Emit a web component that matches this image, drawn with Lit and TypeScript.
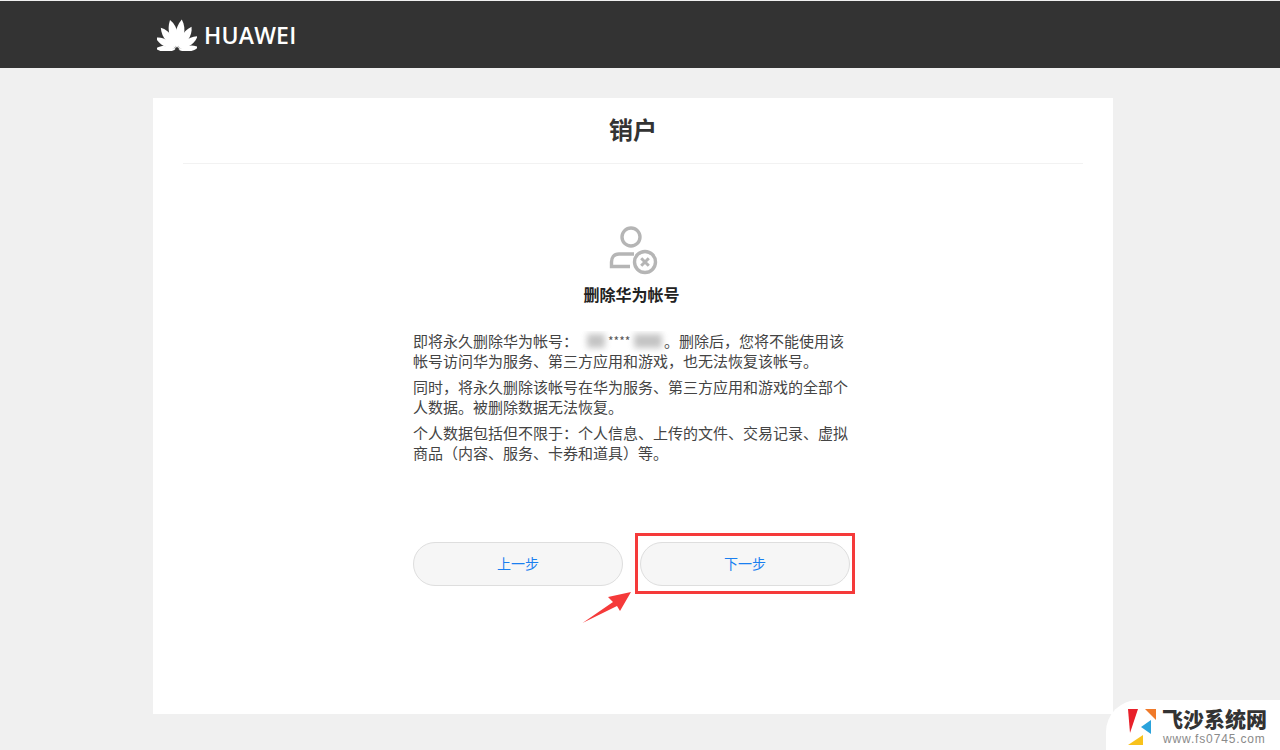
import { LitElement, html, css, svg } from "lit";
import { customElement } from "lit/decorators.js";

@customElement("app-root")
export class AppRoot extends LitElement {
  static styles = css`
    :host {
      display: block;
      position: relative;
      width: 1280px;
      height: 750px;
      overflow: hidden;
      background: #f0f0f0;
      font-family: "Noto Sans CJK SC", "Noto Sans", sans-serif;
      color: #333;
    }
    .top {
      height: 67px;
      margin-top: 1px;
      background: #333;
      padding-left: 157px;
      display: flex;
      align-items: center;
      gap: 7px;
    }
    .top svg { display: block; }
    .brand {
      font-family: "Open Sans", "Liberation Sans", sans-serif;
      font-weight: 600;
      font-size: 23px;
      letter-spacing: 0.2px;
      color: #fff;
      line-height: 1;
      margin-top: 1px;
    }
    .card {
      width: 960px;
      height: 616px;
      margin: 30px 0 0 153px;
      background: #fff;
      padding: 0 30px;
      box-sizing: border-box;
      display: flex;
      flex-direction: column;
      align-items: center;
    }
    h1 {
      align-self: stretch;
      height: 66px;
      margin: 0;
      border-bottom: 1px solid #f2f2f2;
      text-align: center;
      font-size: 24px;
      font-weight: 700;
      line-height: 62px;
      color: #333;
      box-sizing: border-box;
    }
    .icon { display: block; margin-top: 62px; margin-right: 1px; }
    h2 {
      margin: 6px 3px 0 0;
      font-size: 16px;
      font-weight: 700;
      line-height: 24px;
      color: #222;
    }
    .body { width: 437px; margin-top: 25px; align-self: flex-start; margin-left: 230px; }
    p {
      margin: 0 0 6px;
      font-size: 15px;
      line-height: 20px;
      color: #444;
      height: 40px;
      overflow: hidden;
    }
    .acct {
      display: inline-flex;
      vertical-align: top;
      align-items: center;
      width: 77px;
      height: 20px;
      margin-left: 9px;
      white-space: nowrap;
    }
    .blur {
      flex: none;
      height: 14px;
      background: #c4c4c4;
      filter: blur(3px);
    }
    .b1 { width: 18px; margin-right: 3px; }
    .b2 { width: 28px; margin-left: 1px; }
    .stars { flex: none; width: 25px; font-size: 12px; line-height: 18px; color: #555; }
    .actions {
      display: flex;
      gap: 17px;
      margin-top: 73px;
      width: 437px;
      align-self: flex-start;
      margin-left: 230px;
    }
    button {
      width: 210px;
      height: 44px;
      border-radius: 22px;
      border: 1px solid #dedede;
      background: #f6f6f6;
      color: #1a7ff0;
      font-family: inherit;
      font-size: 14px;
      padding: 0 0 2px;
    }
    .mark {
      position: absolute;
      left: 635px;
      top: 533px;
      width: 220px;
      height: 61px;
      box-sizing: border-box;
      border: 3px solid #f53a3a;
    }
    .arrow { position: absolute; left: 582px; top: 592px; display: block; }
    .wm {
      position: absolute;
      left: 1106px;
      top: 700px;
      width: 174px;
      height: 50px;
      background: #fff;
      border-top-left-radius: 32px;
    }
    .wm svg { position: absolute; left: 22px; top: 8px; display: block; }
    .wm-t {
      position: absolute;
      left: 56px;
      top: 5px;
      font-size: 21px;
      font-weight: 900;
      line-height: 26px;
      color: #333;
      white-space: nowrap;
    }
    .wm-u {
      position: absolute;
      left: 57px;
      top: 32px;
      font-family: "Liberation Sans", sans-serif;
      font-size: 12px;
      letter-spacing: 0.85px;
      line-height: 14px;
      color: #8a8a8a;
      white-space: nowrap;
    }
  `;

  render() {
    const petals: [number, number][] = [
      [-84, 0.78],
      [-58, 0.9],
      [-34, 1.0],
      [-11, 1.12],
      [11, 1.12],
      [34, 1.0],
      [58, 0.9],
      [84, 0.78],
    ];
    return html`
      <header class="top">
        <svg width="40" height="32" viewBox="-20 -31 40 32" aria-hidden="true">
          ${petals.map(
            ([a, s]) => svg`<path
              fill="#fff"
              transform="rotate(${a}) scale(${s})"
              d="M0 -2 C-3.5 -9 -6.5 -18 -1 -27.5 C5.5 -20 4 -9 0 -2 Z"
            ></path>`
          )}
        </svg>
        <span class="brand">HUAWEI</span>
      </header>
      <main class="card">
        <h1>销户</h1>
        <svg class="icon" width="50" height="50" viewBox="0 0 50 50" fill="none" stroke="#b5b5b5" stroke-width="3.4">
          <circle cx="23" cy="11" r="9"></circle>
          <path d="M26 28 H11 C5.5 28 3.5 32 3.5 36 V40.5 H22"></path>
          <circle cx="37" cy="36" r="10.5"></circle>
          <path d="M33.2 32.2 L40.8 39.8 M40.8 32.2 L33.2 39.8" stroke-width="3"></path>
        </svg>
        <h2>删除华为帐号</h2>
        <section class="body">
          <p>即将永久删除华为帐号：<span class="acct"><span class="blur b1"></span><span class="stars">****</span><span class="blur b2"></span></span>。删除后，您将不能使用该帐号访问华为服务、第三方应用和游戏，也无法恢复该帐号。</p>
          <p>同时，将永久删除该帐号在华为服务、第三方应用和游戏的全部个人数据。被删除数据无法恢复。</p>
          <p>个人数据包括但不限于：个人信息、上传的文件、交易记录、虚拟商品（内容、服务、卡券和道具）等。</p>
        </section>
        <div class="actions">
          <button>上一步</button>
          <button>下一步</button>
        </div>
      </main>
      <div class="mark"></div>
      <svg class="arrow" width="50" height="32" viewBox="0 0 50 32">
        <path fill="#f53a3a" d="M0.5 31 L31 10 L26 5 L49 0 L38 19 L35 14 Z"></path>
      </svg>
      <aside class="wm">
        <svg width="30" height="42" viewBox="0 0 30 42">
          <path fill="#e8202a" d="M0 1 H10 L2 25 Z"></path>
          <path fill="#f07a2a" d="M17 1 H28 V12 Z"></path>
          <path fill="#2aa3dc" d="M23 12 V26 L13 19 Z"></path>
          <path fill="#f8c21c" d="M15 27 V37 H0 Z"></path>
        </svg>
        <span class="wm-t">飞沙系统网</span>
        <span class="wm-u">www.fs0745.com</span>
      </aside>
    `;
  }
}
